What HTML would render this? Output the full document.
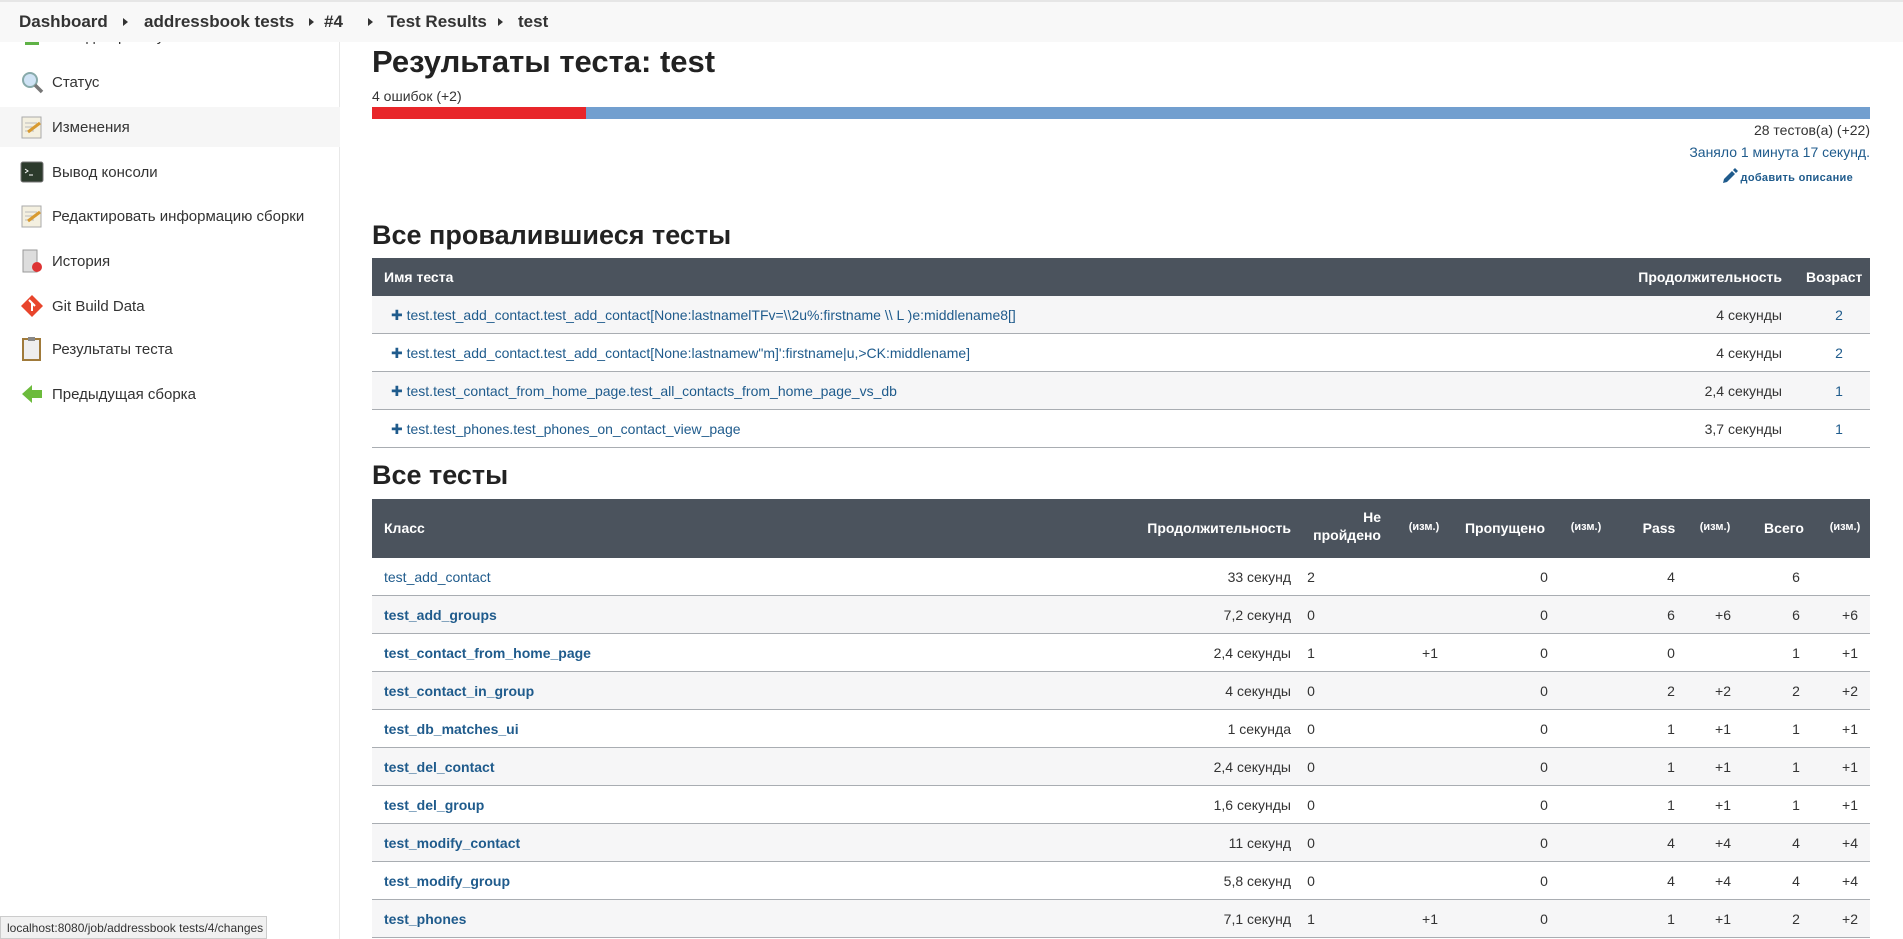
<!DOCTYPE html>
<html><head><meta charset="utf-8"><style>
*{margin:0;padding:0;box-sizing:border-box}
body{width:1903px;height:939px;overflow:hidden;background:#fff;font-family:"Liberation Sans","DejaVu Sans",sans-serif;color:#333;position:relative;font-size:14px}
.a{position:absolute;white-space:nowrap}
.bc{position:absolute;left:0;top:0;width:1903px;height:42px;background:#f8f8f8;border-top:2px solid #e6e6e6;z-index:5}
.bc span{position:absolute;top:10px;font-weight:bold;font-size:17px;color:#333}
.tri{position:absolute;top:16px;width:0;height:0;border-left:5px solid #333;border-top:4px solid transparent;border-bottom:4px solid transparent}
.side{position:absolute;left:0;top:42px;width:340px;height:897px;border-right:1px solid #e8e8e8}
.it{position:absolute;left:0;width:340px;height:38px}
.it .ic{position:absolute;left:20px;top:8px;width:24px;height:24px}
.it .tx{position:absolute;left:52px;top:12px;font-size:15px;color:#333}
.link{color:#1f5b8c}
.th{position:absolute;background:#4b535d;color:#fff;font-weight:bold;font-size:13px}
.row{position:absolute;left:372px;width:1498px;height:38px;border-bottom:1px solid #a9adb2}
.row.g{background:#f6f6f7}
.c{position:absolute;top:11px;font-size:14px;white-space:nowrap}
.r{transform:translateX(-100%)}
.m{transform:translateX(-50%)}
</style></head><body>
<div class="bc">
<span style="left:19px">Dashboard</span><i class="tri" style="left:123px"></i>
<span style="left:144px">addressbook tests</span><i class="tri" style="left:309px"></i>
<span style="left:324px">#4</span><i class="tri" style="left:368px"></i>
<span style="left:387px">Test Results</span><i class="tri" style="left:498px"></i>
<span style="left:518px">test</span>
</div>
<div class="side">
<div class="it" style="top:-23px"><div class="ic" style="background:#5fb246;top:0px;height:26px;width:14px;left:25px"></div><div class="tx" style="top:9px">Назад к проекту</div></div>
<div class="it" style="top:20px"><svg class="ic" viewBox="0 0 24 24"><circle cx="10" cy="10" r="7" fill="#cfe3f5" stroke="#8aa" stroke-width="2"/><path d="M15 15l7 7" stroke="#777" stroke-width="3.5"/></svg><div class="tx">Статус</div></div>
<div class="it" style="top:65px;background:#f6f6f6;height:40px"><svg class="ic" viewBox="0 0 24 24"><rect x="2" y="2" width="19" height="21" fill="#f4f0e0" stroke="#aaa"/><path d="M5 8h12M5 12h12M5 16h9" stroke="#bbb"/><path d="M8 17l12-9" stroke="#d89a30" stroke-width="3"/></svg><div class="tx">Изменения</div></div>
<div class="it" style="top:110px"><svg class="ic" viewBox="0 0 24 24"><rect x="1" y="2" width="22" height="20" rx="2" fill="#2c3a2c" stroke="#777"/><path d="M5 9l3 2-3 2M9 15h4" stroke="#fff" fill="none"/></svg><div class="tx">Вывод консоли</div></div>
<div class="it" style="top:154px"><svg class="ic" viewBox="0 0 24 24"><rect x="2" y="2" width="19" height="21" fill="#f4f0e0" stroke="#aaa"/><path d="M5 8h12M5 12h12M5 16h9" stroke="#bbb"/><path d="M8 17l12-9" stroke="#d89a30" stroke-width="3"/></svg><div class="tx">Редактировать информацию сборки</div></div>
<div class="it" style="top:199px"><svg class="ic" viewBox="0 0 24 24"><rect x="3" y="1" width="14" height="22" fill="#ddd" stroke="#999"/><circle cx="17" cy="18" r="5" fill="#d33"/></svg><div class="tx">История</div></div>
<div class="it" style="top:244px"><svg class="ic" viewBox="0 0 24 24"><path d="M12 1l11 11-11 11L1 12z" fill="#e8452c"/><path d="M9 6l6 6M12 9v8" stroke="#fff" stroke-width="2"/></svg><div class="tx">Git Build Data</div></div>
<div class="it" style="top:287px"><svg class="ic" viewBox="0 0 24 24"><rect x="3" y="2" width="17" height="21" fill="#eee" stroke="#a07a3a" stroke-width="2"/><rect x="8" y="0" width="7" height="4" fill="#888"/></svg><div class="tx">Результаты теста</div></div>
<div class="it" style="top:332px"><svg class="ic" viewBox="0 0 24 24"><path d="M2 12l10-9v5h10v8H12v5z" fill="#6cbb3c"/></svg><div class="tx">Предыдущая сборка</div></div>
</div>

<div class="a" style="left:372px;top:44px;font-size:31px;font-weight:bold;color:#222">Результаты теста: test</div>
<div class="a" style="left:372px;top:88px;font-size:14px">4 ошибок (+2)</div>
<div class="a" style="left:372px;top:107px;width:214px;height:12px;background:#e8262a"></div>
<div class="a" style="left:586px;top:107px;width:1284px;height:12px;background:#729fcf"></div>
<div class="a r" style="left:1870px;top:122px;font-size:14px">28 тестов(а) (+22)</div>
<div class="a r link" style="left:1870px;top:144px;font-size:14px">Заняло 1 минута 17 секунд.</div>
<div class="a r link" style="left:1853px;top:172px;font-size:11px;font-weight:bold;letter-spacing:0.3px">добавить описание</div>
<svg class="a" style="left:1722px;top:168px" width="16" height="16" viewBox="0 0 16 16"><path d="M1 15l1-4 8-8 3 3-8 8z M11 2l2-2 3 3-2 2z" fill="#1f5b8c"/></svg>

<div class="a" style="left:372px;top:220px;font-size:27px;font-weight:bold;color:#222">Все провалившиеся тесты</div>
<div class="th" style="left:372px;top:258px;width:1498px;height:38px">
<span class="c" style="left:12px">Имя теста</span><span class="c r" style="left:1410px">Продолжительность</span><span class="c" style="left:1434px">Возраст</span></div>
<div class="row g" style="top:296px"><span class="c link" style="left:19px">✚ test.test_add_contact.test_add_contact[None:lastnamelTFv=\\2u%:firstname \\ L )e:middlename8[]</span><span class="c r" style="left:1410px">4 секунды</span><span class="c link m" style="left:1467px">2</span></div>
<div class="row" style="top:334px"><span class="c link" style="left:19px">✚ test.test_add_contact.test_add_contact[None:lastnamew"m]':firstname|u,&gt;CK:middlename]</span><span class="c r" style="left:1410px">4 секунды</span><span class="c link m" style="left:1467px">2</span></div>
<div class="row g" style="top:372px"><span class="c link" style="left:19px">✚ test.test_contact_from_home_page.test_all_contacts_from_home_page_vs_db</span><span class="c r" style="left:1410px">2,4 секунды</span><span class="c link m" style="left:1467px">1</span></div>
<div class="row" style="top:410px"><span class="c link" style="left:19px">✚ test.test_phones.test_phones_on_contact_view_page</span><span class="c r" style="left:1410px">3,7 секунды</span><span class="c link m" style="left:1467px">1</span></div>

<div class="a" style="left:372px;top:460px;font-size:27px;font-weight:bold;color:#222">Все тесты</div>
<div class="th" style="left:372px;top:499px;width:1498px;height:59px">
<span class="c" style="left:12px;top:21px">Класс</span>
<span class="c r" style="left:919px;top:21px">Продолжительность</span>
<span class="c r" style="left:1009px;top:9px;text-align:right;line-height:18px">Не<br>пройдено</span>
<span class="c m" style="left:1052px;top:22px;font-size:11px">(изм.)</span>
<span class="c m" style="left:1133px;top:21px">Пропущено</span>
<span class="c m" style="left:1214px;top:22px;font-size:11px">(изм.)</span>
<span class="c m" style="left:1287px;top:21px">Pass</span>
<span class="c m" style="left:1343px;top:22px;font-size:11px">(изм.)</span>
<span class="c m" style="left:1412px;top:21px">Всего</span>
<span class="c m" style="left:1473px;top:22px;font-size:11px">(изм.)</span>
</div>
<div class="row" style="top:558px"><span class="c link" style="left:12px">test_add_contact</span><span class="c r" style="left:919px">33 секунд</span><span class="c m" style="left:939px">2</span><span class="c m" style="left:1172px">0</span><span class="c m" style="left:1299px">4</span><span class="c m" style="left:1424px">6</span></div>
<div class="row g" style="top:596px"><span class="c link" style="left:12px;font-weight:bold">test_add_groups</span><span class="c r" style="left:919px">7,2 секунд</span><span class="c m" style="left:939px">0</span><span class="c m" style="left:1172px">0</span><span class="c m" style="left:1299px">6</span><span class="c m" style="left:1351px">+6</span><span class="c m" style="left:1424px">6</span><span class="c m" style="left:1478px">+6</span></div>
<div class="row" style="top:634px"><span class="c link" style="left:12px;font-weight:bold">test_contact_from_home_page</span><span class="c r" style="left:919px">2,4 секунды</span><span class="c m" style="left:939px">1</span><span class="c m" style="left:1058px">+1</span><span class="c m" style="left:1172px">0</span><span class="c m" style="left:1299px">0</span><span class="c m" style="left:1424px">1</span><span class="c m" style="left:1478px">+1</span></div>
<div class="row g" style="top:672px"><span class="c link" style="left:12px;font-weight:bold">test_contact_in_group</span><span class="c r" style="left:919px">4 секунды</span><span class="c m" style="left:939px">0</span><span class="c m" style="left:1172px">0</span><span class="c m" style="left:1299px">2</span><span class="c m" style="left:1351px">+2</span><span class="c m" style="left:1424px">2</span><span class="c m" style="left:1478px">+2</span></div>
<div class="row" style="top:710px"><span class="c link" style="left:12px;font-weight:bold">test_db_matches_ui</span><span class="c r" style="left:919px">1 секунда</span><span class="c m" style="left:939px">0</span><span class="c m" style="left:1172px">0</span><span class="c m" style="left:1299px">1</span><span class="c m" style="left:1351px">+1</span><span class="c m" style="left:1424px">1</span><span class="c m" style="left:1478px">+1</span></div>
<div class="row g" style="top:748px"><span class="c link" style="left:12px;font-weight:bold">test_del_contact</span><span class="c r" style="left:919px">2,4 секунды</span><span class="c m" style="left:939px">0</span><span class="c m" style="left:1172px">0</span><span class="c m" style="left:1299px">1</span><span class="c m" style="left:1351px">+1</span><span class="c m" style="left:1424px">1</span><span class="c m" style="left:1478px">+1</span></div>
<div class="row" style="top:786px"><span class="c link" style="left:12px;font-weight:bold">test_del_group</span><span class="c r" style="left:919px">1,6 секунды</span><span class="c m" style="left:939px">0</span><span class="c m" style="left:1172px">0</span><span class="c m" style="left:1299px">1</span><span class="c m" style="left:1351px">+1</span><span class="c m" style="left:1424px">1</span><span class="c m" style="left:1478px">+1</span></div>
<div class="row g" style="top:824px"><span class="c link" style="left:12px;font-weight:bold">test_modify_contact</span><span class="c r" style="left:919px">11 секунд</span><span class="c m" style="left:939px">0</span><span class="c m" style="left:1172px">0</span><span class="c m" style="left:1299px">4</span><span class="c m" style="left:1351px">+4</span><span class="c m" style="left:1424px">4</span><span class="c m" style="left:1478px">+4</span></div>
<div class="row" style="top:862px"><span class="c link" style="left:12px;font-weight:bold">test_modify_group</span><span class="c r" style="left:919px">5,8 секунд</span><span class="c m" style="left:939px">0</span><span class="c m" style="left:1172px">0</span><span class="c m" style="left:1299px">4</span><span class="c m" style="left:1351px">+4</span><span class="c m" style="left:1424px">4</span><span class="c m" style="left:1478px">+4</span></div>
<div class="row g" style="top:900px"><span class="c link" style="left:12px;font-weight:bold">test_phones</span><span class="c r" style="left:919px">7,1 секунд</span><span class="c m" style="left:939px">1</span><span class="c m" style="left:1058px">+1</span><span class="c m" style="left:1172px">0</span><span class="c m" style="left:1299px">1</span><span class="c m" style="left:1351px">+1</span><span class="c m" style="left:1424px">2</span><span class="c m" style="left:1478px">+2</span></div>

<div class="a" style="left:0;top:916px;width:267px;height:23px;background:#f1f1f1;border:1px solid #ccc;font-size:12px;padding:4px 6px;color:#333;z-index:6">localhost:8080/job/addressbook tests/4/changes</div>
</body></html>
